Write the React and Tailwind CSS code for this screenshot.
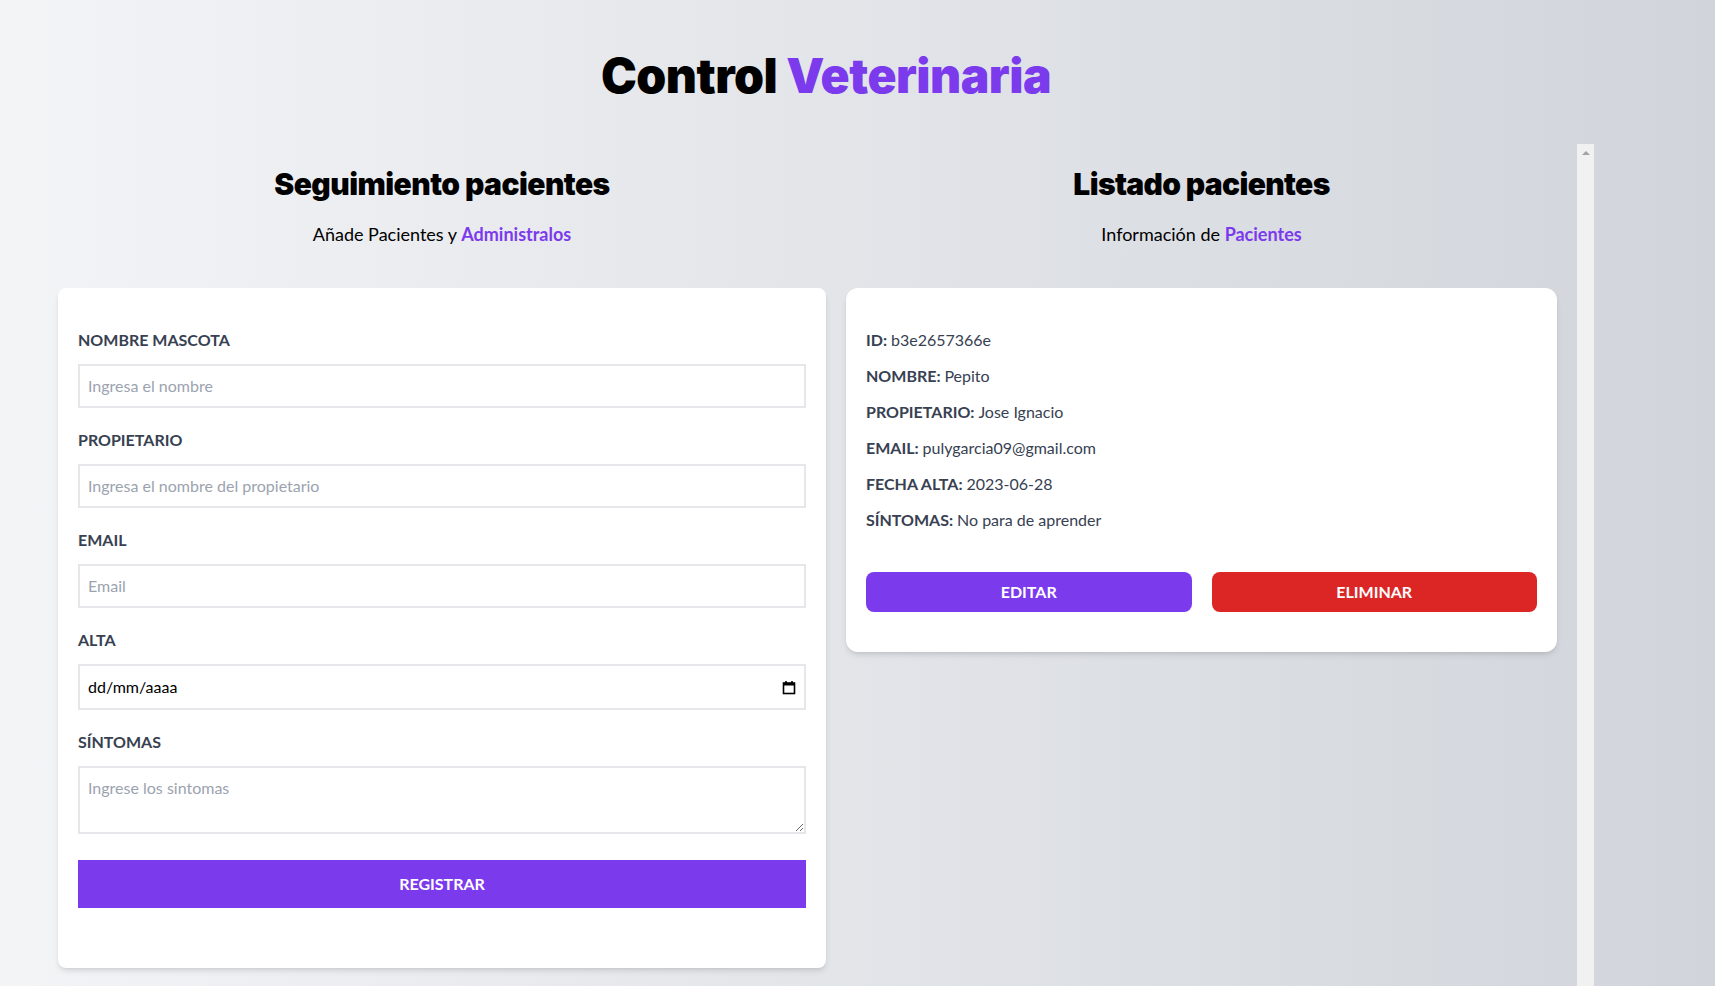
import React from 'react';

const font = { fontFamily: '"Segoe UI", Lato, "Noto Sans", sans-serif' };
const heavy = { fontFamily: 'Inter, "Noto Sans", sans-serif' };

const Field = ({ label, placeholder, type = 'text' }) => (
    <div className="mb-5">
        <label className="block text-[#374151] uppercase font-bold">{label}</label>
        <input
            type={type}
            placeholder={placeholder}
            className="border-2 border-[#e5e7eb] w-full p-2 mt-3 placeholder-[#9ca3af] outline-none"
        />
    </div>
);

const Row = ({ label, value }) => (
    <p className="font-bold mb-3 text-[#374151] uppercase">
        {label} <span className="font-normal normal-case">{value}</span>
    </p>
);

const CalendarIcon = () => (
    <svg width="14" height="15" viewBox="0 0 14 15" fill="none">
        <rect x="1.5" y="3" width="11" height="10.5" stroke="#000" strokeWidth="1.6" />
        <rect x="1.5" y="3" width="11" height="2.5" fill="#000" />
        <line x1="4" y1="1" x2="4" y2="3" stroke="#000" strokeWidth="1.6" />
        <line x1="10" y1="1" x2="10" y2="3" stroke="#000" strokeWidth="1.6" />
    </svg>
);

export default function App() {
    return (
        <div className="h-screen overflow-hidden bg-linear-to-r from-[#f3f4f6] to-[#d1d5db] text-black" style={font}>
            <div className="w-[1536px] ml-[58px] pt-[52px]">
                {/* Header */}
                <h1 className="font-black text-5xl text-center tracking-[-0.5px]" style={heavy}>
                    Control <span className="text-[#7c3aed]">Veterinaria</span>
                </h1>

                <div className="mt-[44px] flex">
                    {/* Formulario */}
                    <div className="w-1/2 pt-[22px]">
                        <h2 className="font-black text-3xl text-center tracking-[-0.55px]" style={heavy}>Seguimiento pacientes</h2>
                        <p className="text-lg mt-[18px] text-center mb-10">
                            Añade Pacientes y <span className="text-[#7c3aed] font-bold">Administralos</span>
                        </p>

                        <form className="bg-white shadow-md rounded-lg pt-10 pb-[60px] px-5">
                            <Field label="Nombre Mascota" placeholder="Ingresa el nombre" />
                            <Field label="Propietario" placeholder="Ingresa el nombre del propietario" />
                            <Field label="Email" placeholder="Email" type="email" />

                            <div className="mb-5">
                                <label className="block text-[#374151] uppercase font-bold">Alta</label>
                                <div className="border-2 border-[#e5e7eb] w-full p-2 mt-3 flex items-center justify-between h-[46px]">
                                    <span>dd/mm/aaaa</span>
                                    <CalendarIcon />
                                </div>
                            </div>

                            <div className="mb-5">
                                <label className="block text-[#374151] uppercase font-bold">Síntomas</label>
                                <textarea
                                    rows={2}
                                    placeholder="Ingrese los sintomas"
                                    className="border-2 border-[#e5e7eb] w-full p-2 mt-3 placeholder-[#9ca3af] outline-none"
                                />
                            </div>

                            <button type="button" className="bg-[#7c3aed] w-full p-3 text-white uppercase font-bold">
                                Registrar
                            </button>
                        </form>
                    </div>

                    {/* Listado, with its scroll track */}
                    <div className="w-1/2 h-[842px] flex">
                        <div className="flex-1 overflow-hidden pt-[22px]">
                            <h2 className="font-black text-3xl text-center tracking-[-0.65px]" style={heavy}>Listado pacientes</h2>
                            <p className="text-lg mt-[18px] mb-10 text-center">
                                Información de <span className="text-[#7c3aed] font-bold">Pacientes</span>
                            </p>

                            <div className="mx-5 bg-white shadow-md px-5 py-10 rounded-xl">
                                <Row label="ID:" value="b3e2657366e" />
                                <Row label="Nombre:" value="Pepito" />
                                <Row label="Propietario:" value="Jose Ignacio" />
                                <Row label="Email:" value="pulygarcia09@gmail.com" />
                                <Row label="Fecha Alta:" value="2023-06-28" />
                                <Row label="Síntomas:" value="No para de aprender" />

                                <div className="flex gap-5 mt-10">
                                    <button className="flex-1 py-2 bg-[#7c3aed] text-white font-bold uppercase rounded-lg">
                                        Editar
                                    </button>
                                    <button className="flex-1 py-2 bg-[#dc2626] text-white font-bold uppercase rounded-lg">
                                        Eliminar
                                    </button>
                                </div>
                            </div>
                        </div>
                        <div className="w-[17px] bg-[#f1f1f1] flex justify-center pt-[7px]">
                            <div className="w-0 h-0 border-l-[4px] border-r-[4px] border-b-[4px] border-l-transparent border-r-transparent border-b-[#a3a3a3]" />
                        </div>
                    </div>
                </div>
            </div>
        </div>
    );
}
